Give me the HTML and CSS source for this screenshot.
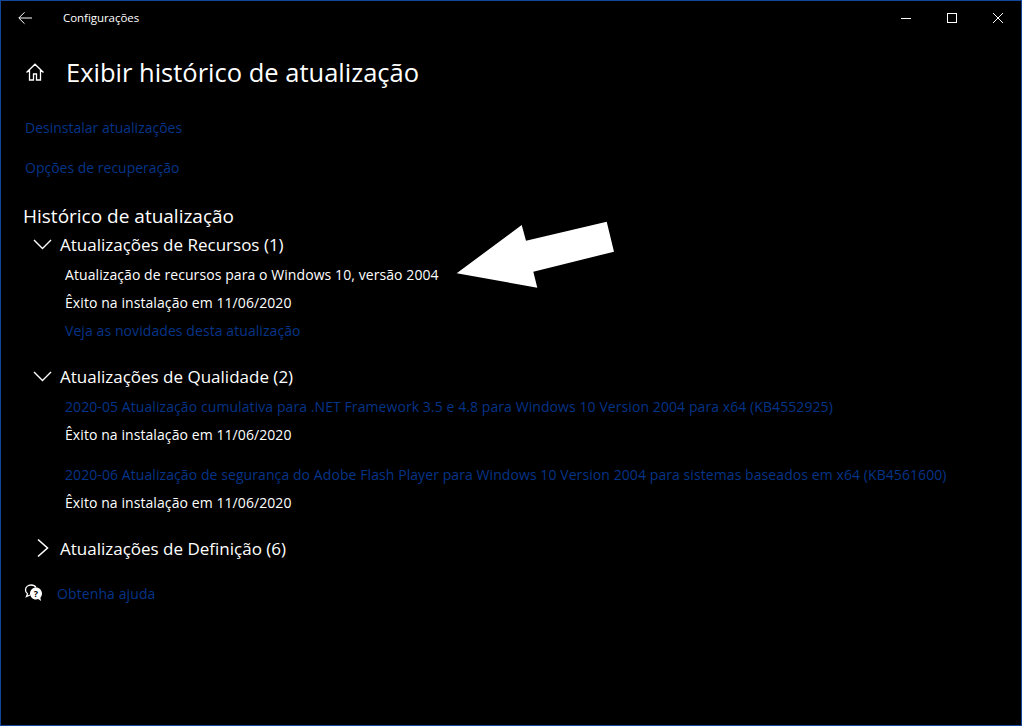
FILE: index.html
```html
<!DOCTYPE html>
<html lang="pt-BR">
<head>
    <meta charset="UTF-8">
    <title>Configurações</title>
    <link rel="stylesheet" href="styles.css">
</head>
<body>
    <div class="window">
        <div class="titlebar">
            <svg class="back-icon" width="16" height="16" viewBox="0 0 16 16"><path d="M15 8H2M7.500 2.300 1.800 8l5.700 5.700" fill="none" stroke="#fff" stroke-width="1"/></svg>
            <span class="app-name">Configurações</span>
            <div class="controls">
                <svg width="12" height="12" viewBox="0 0 12 12"><path d="M1 6.500h10" stroke="#fff" stroke-width="1"/></svg>
                <svg width="12" height="12" viewBox="0 0 12 12"><rect x="1.500" y="1.500" width="9" height="9" fill="none" stroke="#fff" stroke-width="1"/></svg>
                <svg width="12" height="12" viewBox="0 0 12 12"><path d="M1 1l10 10M11 1 1 11" stroke="#fff" stroke-width="1"/></svg>
            </div>
        </div>

        <div class="page-head">
            <svg class="home-icon" width="20" height="20" viewBox="0 0 20 20"><path d="M1.500 10.500 10 2.200l8.500 8.300M4.500 8v10h4v-6h3v6h4V8" fill="none" stroke="#fff" stroke-width="1.300"/></svg>
            <h1>Exibir histórico de atualização</h1>
        </div>

        <div class="top-links">
            <a class="link">Desinstalar atualizações</a>
            <a class="link">Opções de recuperação</a>
        </div>

        <h2>Histórico de atualização</h2>

        <div class="group">
            <div class="group-head">
                <svg width="20" height="12" viewBox="0 0 20 12"><path d="M2 2 10.500 10.500 19 2" fill="none" stroke="#fff" stroke-width="1.400"/></svg>
                <span>Atualizações de Recursos (1)</span>
            </div>
            <div class="entry">
                <p>Atualização de recursos para o Windows 10, versão 2004</p>
                <p>Êxito na instalação em 11/06/2020</p>
                <p><a class="link">Veja as novidades desta atualização</a></p>
            </div>
        </div>

        <div class="group">
            <div class="group-head">
                <svg width="20" height="12" viewBox="0 0 20 12"><path d="M2 2 10.500 10.500 19 2" fill="none" stroke="#fff" stroke-width="1.400"/></svg>
                <span>Atualizações de Qualidade (2)</span>
            </div>
            <div class="entry">
                <p><a class="link">2020-05 Atualização cumulativa para .NET Framework 3.5 e 4.8 para Windows 10 Version 2004 para x64 (KB4552925)</a></p>
                <p>Êxito na instalação em 11/06/2020</p>
            </div>
            <div class="entry">
                <p><a class="link">2020-06 Atualização de segurança do Adobe Flash Player para Windows 10 Version 2004 para sistemas baseados em x64 (KB4561600)</a></p>
                <p>Êxito na instalação em 11/06/2020</p>
            </div>
        </div>

        <div class="group">
            <div class="group-head">
                <svg width="20" height="20" viewBox="0 0 20 20"><path d="M6 1.500 15.500 10 6 18.500" fill="none" stroke="#fff" stroke-width="1.600"/></svg>
                <span>Atualizações de Definição (6)</span>
            </div>
        </div>

        <div class="help">
            <svg width="20" height="20" viewBox="0 0 20 20">
                <path d="M12 4.500C11 2.800 9.200 2 7.200 2 3.800 2 1.500 4.200 1.500 7c0 1.600.8 3 2 3.800l-1 2.700L6 12" fill="none" stroke="#fff" stroke-width="1.300"/>
                <path d="M12 4.500c-3.300 0-6 2.700-6 6s2.700 6 6 6c.8 0 1.500-.1 2.200-.4l2.800 1.900-.6-3.300c1-1.100 1.600-2.600 1.600-4.200 0-3.300-2.700-6-6-6z" fill="#fff"/>
                <text x="12" y="13.500" class="help-mark">?</text>
            </svg>
            <a class="link">Obtenha ajuda</a>
        </div>

        <svg class="arrow" width="170" height="80" viewBox="0 0 170 80"><polygon points="4.700,53.300 69.700,5 74,20.700 154.700,1.700 162,31.700 81.300,51.700 85.300,67.700" fill="#fff"/></svg>
    </div>
</body>
</html>
```

FILE: styles.css
```css
html, body {
    margin: 0;
    padding: 0;
    background-color: #000;
}
body {
    font-family: "Open Sans", "Noto Sans", sans-serif;
    color: #fff;
}
.window {
    position: relative;
    box-sizing: border-box;
    width: 1022px;
    height: 726px;
    border: 1px solid #12479c;
    background-color: #000;
    overflow: hidden;
}
.titlebar {
    display: flex;
    align-items: center;
    height: 33px;
}
.back-icon {
    margin-left: 16px;
}
.app-name {
    margin-left: 30px;
    font-size: 11.500px;
    letter-spacing: -0.050px;
}
.controls {
    margin-left: auto;
    margin-right: 17px;
    display: flex;
    gap: 34px;
}
.page-head {
    display: flex;
    align-items: center;
    height: 46px;
    margin-top: 15px;
    padding-left: 24px;
}
h1 {
    margin: 0 0 0 21px;
    font-size: 25.500px;
    font-weight: 400;
}
.top-links {
    display: flex;
    flex-direction: column;
    align-items: flex-start;
    gap: 18px;
    margin-top: 22px;
    padding-left: 24px;
    font-size: 14px;
    line-height: 22px;
}
.link {
    color: #043488;
}
h2 {
    margin: 24px 0 0 22px;
    font-size: 19px;
    line-height: 26px;
    font-weight: 400;
}
.group-head {
    display: flex;
    align-items: center;
    height: 26px;
    padding-left: 31px;
    font-size: 17px;
}
.group-head svg {
    margin-right: 8px;
}
.group {
    margin-top: 2px;
    padding-bottom: 16px;
}
.entry {
    padding-left: 64px;
    padding-top: 4px;
    font-size: 14px;
    letter-spacing: 0.080px;
}
.entry + .entry {
    padding-top: 12px;
}
.entry p {
    margin: 0;
    height: 28px;
    line-height: 28px;
}
.help {
    display: flex;
    align-items: center;
    height: 26px;
    margin-top: 3px;
    padding-left: 23px;
    font-size: 14px;
    letter-spacing: 0.100px;
}
.help .link {
    margin-left: 13px;
}
.help-mark {
    font-size: 9px;
    font-weight: 700;
    fill: #000;
    text-anchor: middle;
}
.arrow {
    position: absolute;
    left: 451px;
    top: 219px;
}
```
